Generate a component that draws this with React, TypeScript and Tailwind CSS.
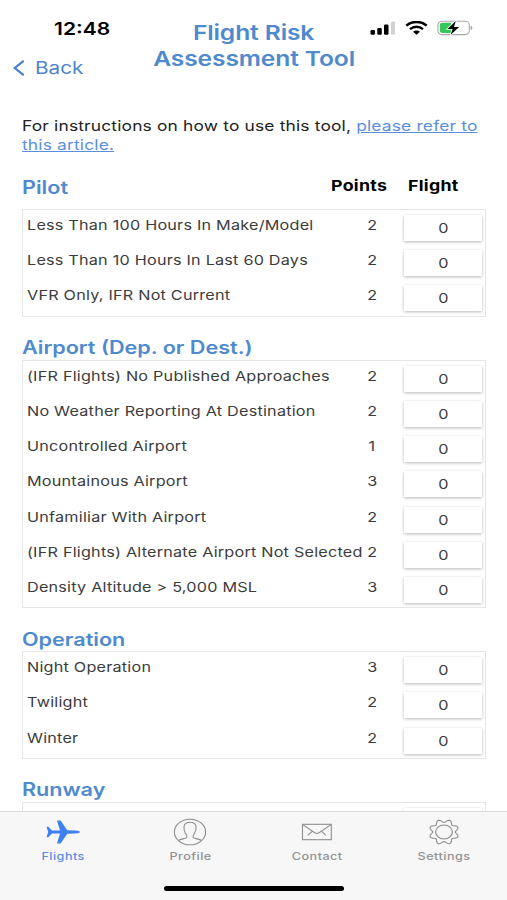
import React from 'react';
import clsx from 'clsx';

interface RiskItem {
  label: string;
  points?: number;
  value?: number;
}

interface RiskSection {
  title: string;
  items: RiskItem[];
}

const sections: RiskSection[] = [
  {
    title: 'Pilot',
    items: [
      { label: 'Less Than 100 Hours In Make/Model', points: 2, value: 0 },
      { label: 'Less Than 10 Hours In Last 60 Days', points: 2, value: 0 },
      { label: 'VFR Only, IFR Not Current', points: 2, value: 0 },
    ],
  },
  {
    title: 'Airport (Dep. or Dest.)',
    items: [
      { label: '(IFR Flights) No Published Approaches', points: 2, value: 0 },
      { label: 'No Weather Reporting At Destination', points: 2, value: 0 },
      { label: 'Uncontrolled Airport', points: 1, value: 0 },
      { label: 'Mountainous Airport', points: 3, value: 0 },
      { label: 'Unfamiliar With Airport', points: 2, value: 0 },
      { label: '(IFR Flights) Alternate Airport Not Selected', points: 2, value: 0 },
      { label: 'Density Altitude > 5,000 MSL', points: 3, value: 0 },
    ],
  },
  {
    title: 'Operation',
    items: [
      { label: 'Night Operation', points: 3, value: 0 },
      { label: 'Twilight', points: 2, value: 0 },
      { label: 'Winter', points: 2, value: 0 },
    ],
  },
  { title: 'Runway', items: [{ label: '' }] },
];

// Wide lettering used across the whole app
const Wide: React.FC<{ children: React.ReactNode; center?: boolean; className?: string }> = ({ children, center, className }) => (
  <span className={clsx('inline-block whitespace-nowrap scale-x-[1.2]', center ? 'origin-center' : 'origin-left', className)}>
    {children}
  </span>
);

const StatusIcons = () => (
  <div className="flex items-center">
    <svg width="26" height="14" viewBox="0 0 26 14">
      <rect x="0.5" y="9" width="4.5" height="4.8" rx="1.3" fill="#000" />
      <rect x="7.3" y="7" width="4.5" height="6.8" rx="1.3" fill="#000" />
      <rect x="14" y="3.6" width="4.5" height="10.2" rx="1.3" fill="#000" />
      <rect x="21" y="0.5" width="4" height="13.3" rx="1.3" fill="#d2d2d2" />
    </svg>
    <svg className="ml-[9px]" width="23" height="14" viewBox="0 0 23 14" fill="none" stroke="#000">
      <path d="M1.3 4.6 C7 -0.3 16 -0.3 21.7 4.6" strokeWidth="2.5" />
      <path d="M5 8.2 C8.8 5 14.2 5 18 8.2" strokeWidth="2.4" />
      <path d="M8 10.7 C10 9.1 13 9.1 15 10.7 L11.5 13.7 Z" fill="#000" stroke="none" />
    </svg>
    <svg className="ml-[9px]" width="36" height="16" viewBox="0 0 36 16">
      <rect x="0.9" y="1.2" width="31.4" height="13.4" rx="4" fill="#fff" stroke="#a8a8a8" strokeWidth="1.1" />
      <path d="M5.5 2.8 H14 V13 H5.5 Q2.8 13 2.8 10.6 V5.2 Q2.8 2.8 5.5 2.8 Z" fill="#34c759" />
      <path d="M33.6 5.6 Q35.4 6.4 35.4 7.9 Q35.4 9.4 33.6 10.2 Z" fill="#a8a8a8" />
      <path d="M18.8 1 L10.6 8.9 H15.6 L13.7 14.8 L22.2 6.9 H17 Z" fill="#000" stroke="#fff" strokeWidth="1.6" paintOrder="stroke" />
    </svg>
  </div>
);

const PlaneIcon = () => (
  <svg width="36" height="26" viewBox="0 0 36 26" fill="#3f80f0">
    <path d="M1.6 7.8 H3.4 L7 11.6 L15 11.4 L12 1.4 H15.6 L22.3 11.2 L30.5 11.5 C33.2 11.7 35 12.3 35 13 C35 13.7 33.2 14.3 30.5 14.5 L22.3 14.8 L15.6 24.6 H12 L15 14.6 L7 14.4 L3.4 18.2 H1.6 L3.2 13 Z" />
  </svg>
);

const ProfileIcon = () => (
  <svg width="34" height="28" viewBox="0 0 34 28" fill="none" stroke="#8e8e8e" strokeWidth="1.1">
    <ellipse cx="17" cy="14" rx="15.6" ry="12.8" />
    <path d="M5.5 22.4 C8.5 20.8 13 20.6 13.8 19.2 C14.4 17.8 13.4 16.8 12.4 15.2 C11.2 13.2 10.8 10.8 11 8.8 C11.3 5.6 13.8 4.2 17 4.2 C20.2 4.2 22.7 5.6 23 8.8 C23.2 10.8 22.8 13.2 21.6 15.2 C20.6 16.8 19.6 17.8 20.2 19.2 C21 20.6 25.5 20.8 28.5 22.4" />
  </svg>
);

const MailIcon = () => (
  <svg width="32" height="18" viewBox="0 0 32 18" fill="none" stroke="#8e8e8e" strokeWidth="1.1">
    <rect x="1.5" y="1.3" width="28.8" height="15.4" />
    <path d="M1.7 1.6 L13.8 9.8 Q15.9 11.2 18 9.8 L30.1 1.6" />
    <path d="M6.8 12.3 L11.2 8.3 M25 12.3 L20.6 8.3" />
  </svg>
);

// Eight rounded teeth, flattened to the icon's oval shape
const gearPoints = Array.from({ length: 97 }, (_, i) => {
  const a = (i / 96) * Math.PI * 2;
  const r = 0.88 - 0.12 * Math.cos(a * 8);
  return `${(16 + 15 * r * Math.cos(a)).toFixed(2)},${(13 + 12.6 * r * Math.sin(a)).toFixed(2)}`;
}).join(' ');

const GearIcon = () => (
  <svg width="32" height="26" viewBox="0 0 32 26" fill="none" stroke="#8e8e8e" strokeWidth="1.1">
    <polygon points={gearPoints} />
    <ellipse cx="16" cy="13" rx="8.4" ry="7" />
  </svg>
);

const tabs = [
  { name: 'Flights', icon: <PlaneIcon />, active: true },
  { name: 'Profile', icon: <ProfileIcon /> },
  { name: 'Contact', icon: <MailIcon /> },
  { name: 'Settings', icon: <GearIcon /> },
];

const RiskRow: React.FC<{ item: RiskItem }> = ({ item }) => (
  <div className="flex h-[35.2px] pl-1 text-[13.5px] leading-[18px] text-[#3c3c3c]">
    <div className="w-[335px] pt-[6px] tracking-[0.18px]"><Wide>{item.label}</Wide></div>
    <div className="w-[20px] pt-[6px] text-center"><Wide center>{item.points}</Wide></div>
    <div className="ml-[22px] mt-[5px] h-[26px] w-[78px] bg-white text-center leading-[27px] shadow-[0_1px_3px_rgba(0,0,0,0.28)]">
      <Wide center>{item.value}</Wide>
    </div>
  </div>
);

export default function App() {
  return (
    <div className="flex h-[900px] w-[507px] flex-col overflow-hidden bg-white font-['Inter',sans-serif]">
      {/* Status bar and title */}
      <header className="flex h-[90px] shrink-0">
        <div className="w-[145px]">
          <div className="mt-[17px] pl-[54px] text-[17.5px] font-semibold leading-6 text-black"><Wide>12:48</Wide></div>
          <div className="mt-[15px] flex items-center pl-[13px] text-[17.3px] leading-6 text-[#5183d0]">
            <svg width="12" height="16" viewBox="0 0 12 16" fill="none" stroke="#4a7fd4" strokeWidth="2.2" strokeLinecap="round">
              <path d="M10 1.3 L1.8 8 L10 14.7" />
            </svg>
            <Wide className="ml-[10px]">Back</Wide>
          </div>
        </div>
        <h1 className="mt-[19.5px] w-[218px] text-center text-[20.5px] font-semibold leading-[26.5px] tracking-[-0.1px] text-[#4f8ace]">
          <Wide center>Flight Risk</Wide>
          <Wide center>Assessment Tool</Wide>
        </h1>
        <div className="ml-[7px] mt-[20px]"><StatusIcons /></div>
      </header>

      <main className="min-h-0 flex-1 overflow-hidden pl-[22px] pr-[21px]">
        <p className="mt-[26px] text-[14.5px] leading-[19px] tracking-[0.13px] text-[#222]">
          <Wide>
            For instructions on how to use this tool, <a className="text-[#5b8fdc] underline">please refer to</a>
            <br />
            <a className="text-[#5b8fdc] underline">this article.</a>
          </Wide>
        </p>

        {sections.map((section, i) => (
          <section key={section.title}>
            <div className={clsx('flex justify-between', i === 0 ? 'h-[55px] pt-[22px]' : 'h-[43.2px] pt-[19.5px]')}>
              <h2 className="text-[18px] font-semibold leading-6 text-[#4f8ace]"><Wide>{section.title}</Wide></h2>
              {i === 0 && (
                <div className="-mt-px flex text-[14.8px] font-bold leading-[22px] tracking-[0.25px] text-black">
                  <div className="w-[77px]"><Wide>Points</Wide></div>
                  <div className="w-[78px]"><Wide>Flight</Wide></div>
                </div>
              )}
            </div>
            <div className="border border-[#e6e6e9]">
              {section.items.map((item) => <RiskRow key={item.label} item={item} />)}
            </div>
          </section>
        ))}
      </main>

      {/* Tab bar */}
      <nav className="flex h-[89px] shrink-0 flex-col border-t border-[#dcdcdc] bg-[#f7f7f7]">
        <div className="grid grid-cols-4">
          {tabs.map((tab) => (
            <div key={tab.name} className="flex flex-col items-center">
              <div className="flex h-[40px] items-center justify-center">{tab.icon}</div>
              <div className={clsx('-mt-[2px] text-[10.5px] font-medium leading-[14px] tracking-[0.4px]', tab.active ? 'text-[#5c8ce4]' : 'text-[#929292]')}>
                <Wide center>{tab.name}</Wide>
              </div>
            </div>
          ))}
        </div>
        <div className="mx-auto mt-[22px] h-[5px] w-[180px] rounded-full bg-black" />
      </nav>
    </div>
  );
}
